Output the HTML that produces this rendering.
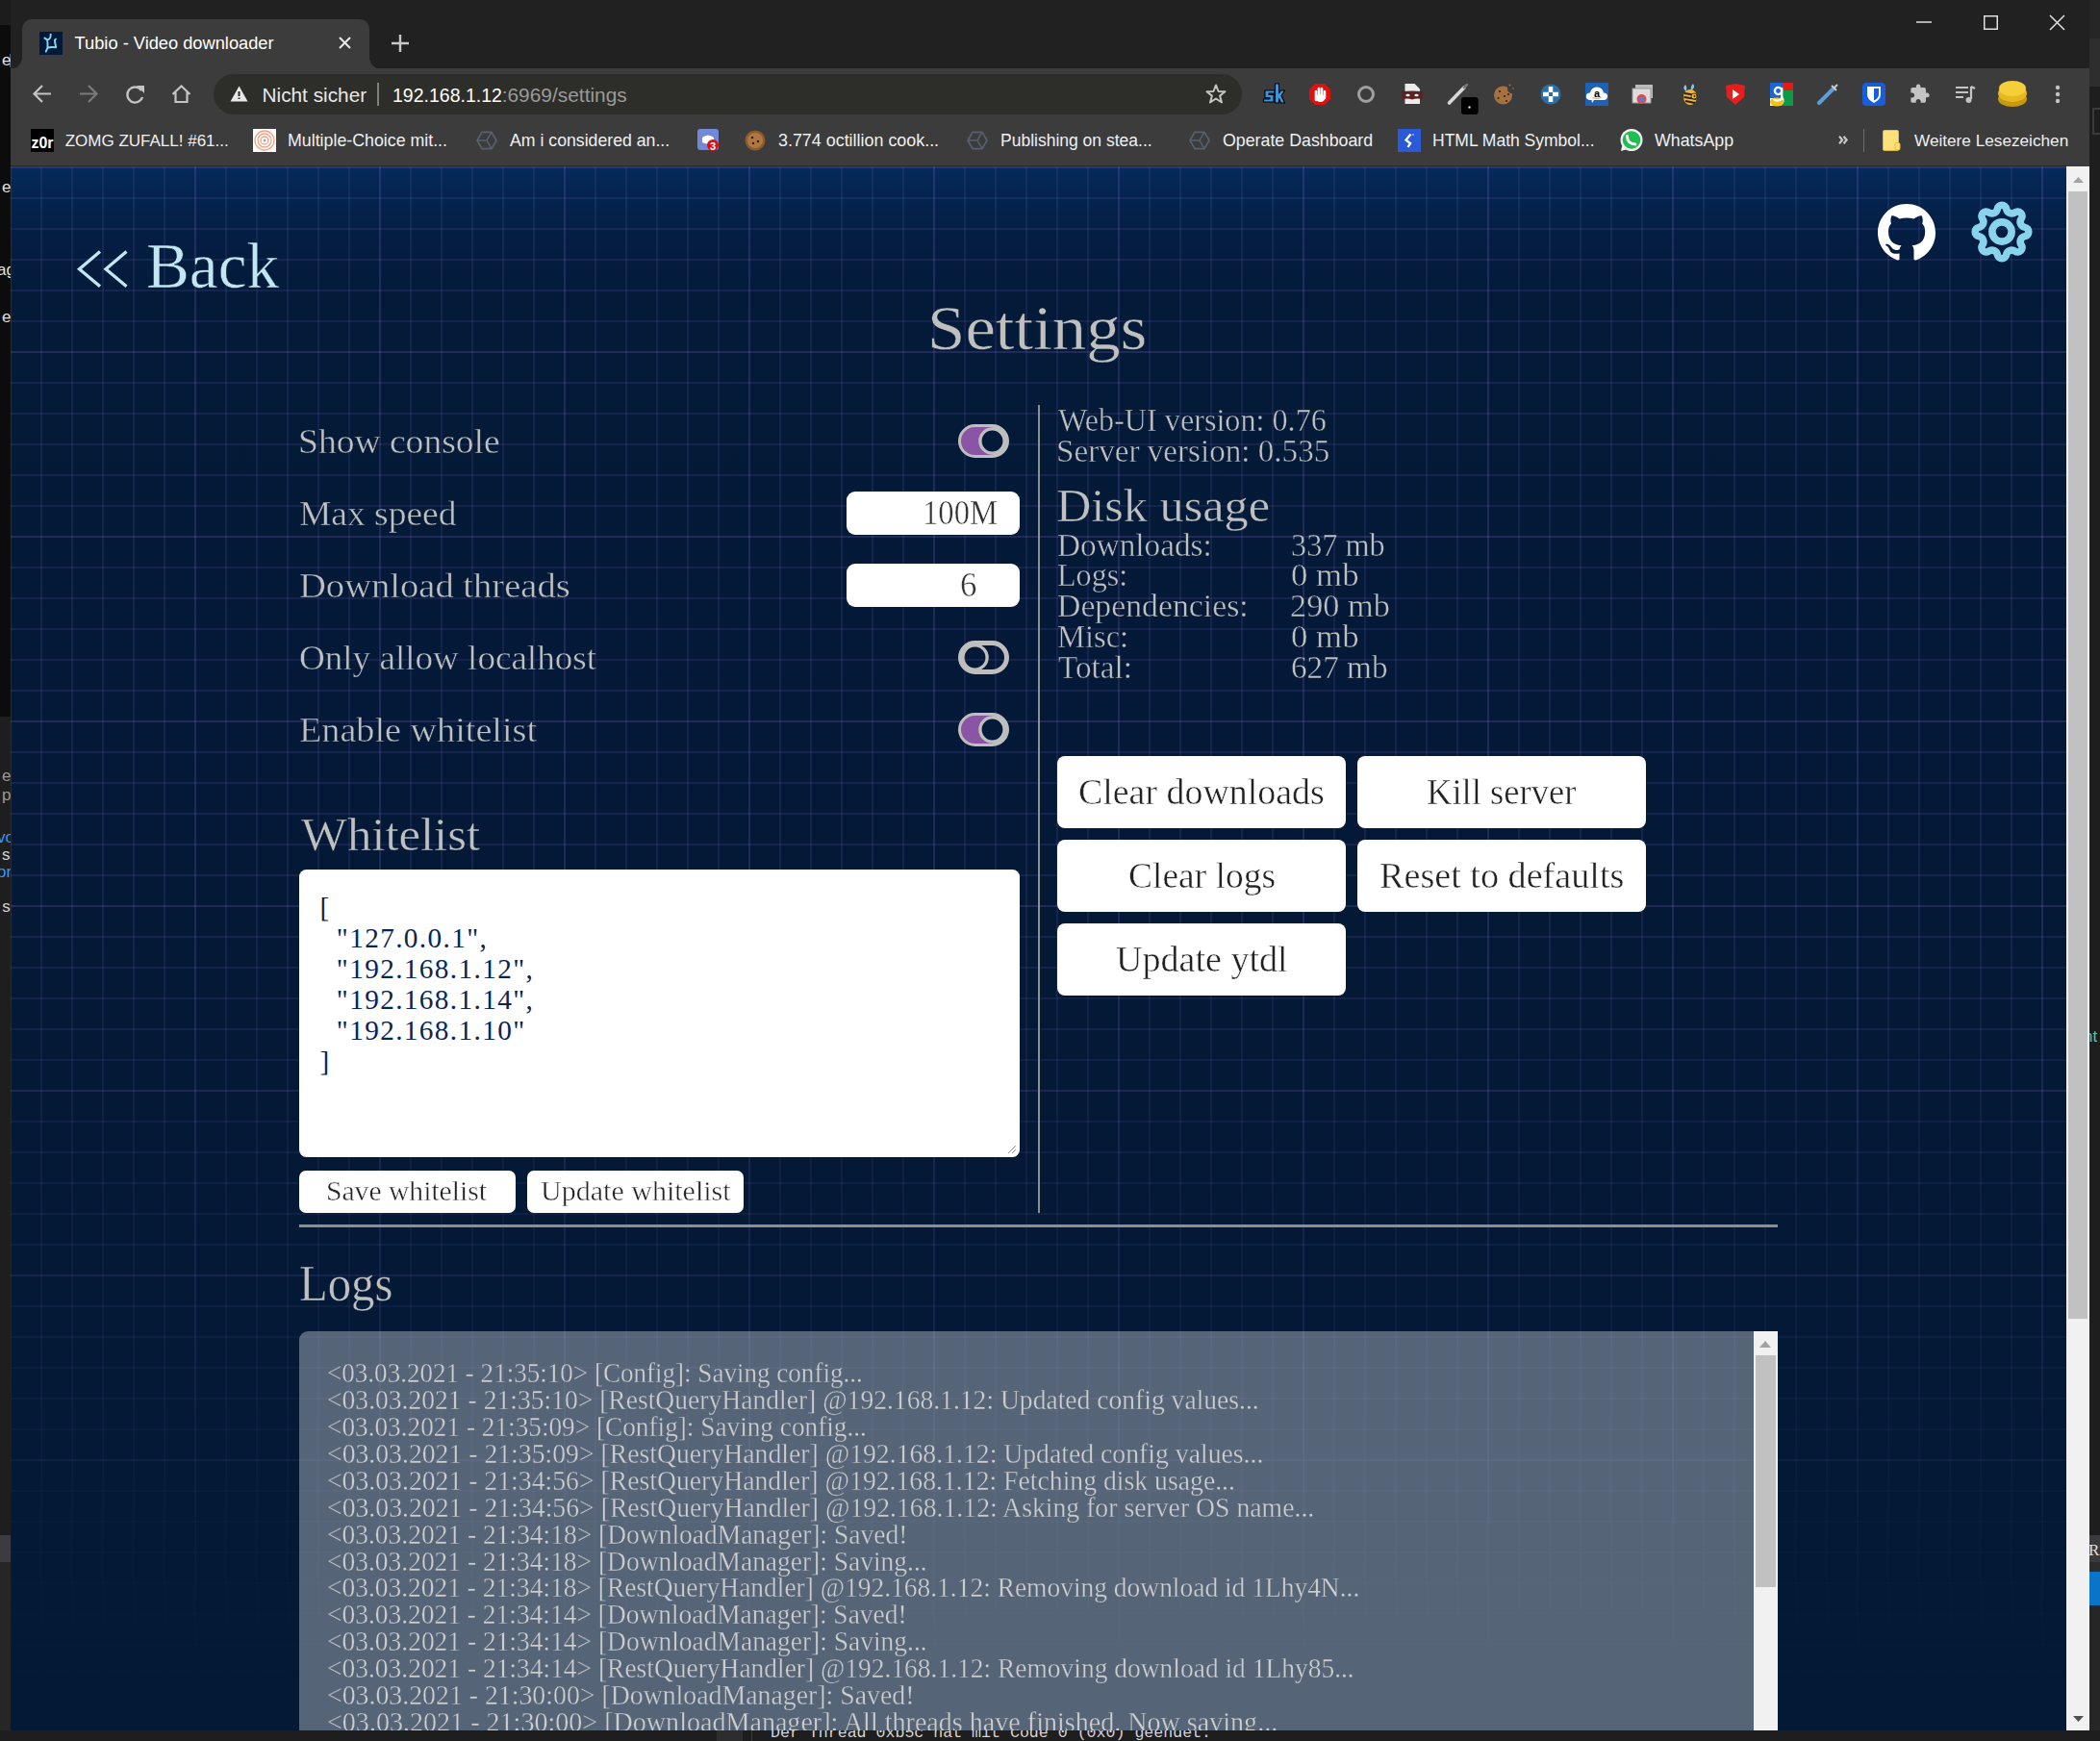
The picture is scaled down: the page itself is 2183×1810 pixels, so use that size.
<!DOCTYPE html>
<html><head><meta charset="utf-8"><title>Tubio - Video downloader</title>
<style>
html,body{margin:0;padding:0;}
body{width:2183px;height:1810px;position:relative;overflow:hidden;background:#0c0c0c;}
.t{position:absolute;white-space:pre;line-height:1;}
.b{position:absolute;box-sizing:border-box;}
svg{position:absolute;overflow:visible;}
</style></head><body>
<div class="b" style="left:0px;top:0px;width:11px;height:26px;background:#1c1c1c;"></div>
<div class="b" style="left:0px;top:26px;width:11px;height:719px;background:#0c0c0c;"></div>
<div class="b" style="left:0px;top:745px;width:11px;height:851px;background:#1e1e1e;"></div>
<div class="b" style="left:0px;top:1596px;width:11px;height:28px;background:#3c3c40;"></div>
<div class="b" style="left:0px;top:1624px;width:11px;height:186px;background:#262626;"></div>
<div class="b" style="left:2172px;top:0px;width:11px;height:1810px;background:#1e1e1e;"></div>
<div class="b" style="left:2172px;top:0px;width:11px;height:40px;background:#262626;"></div>
<div class="b" style="left:2172px;top:40px;width:11px;height:50px;background:#2e2e2e;"></div>
<div class="b" style="left:2175px;top:112px;width:11px;height:28px;border:2px solid #3a3a3a;"></div>
<div class="b" style="left:2172px;top:1596px;width:11px;height:28px;background:#3a3a3e;"></div>
<div class="b" style="left:2172px;top:1624px;width:11px;height:10px;background:#2c2c2c;"></div>
<div class="b" style="left:2172px;top:1669px;width:11px;height:141px;background:#262626;"></div>
<div class="b" style="left:2172px;top:1634px;width:11px;height:35px;background:#0a74c8;"></div>
<div class="b" style="left:2172px;top:1000px;width:11px;height:700px;overflow:hidden;"><div class="t" style="left:-6.0px;top:69px;font-size:17px;color:#4ec9b0;font-family:'Liberation Sans', sans-serif;">nt</div>
<div class="t" style="left:-1.0px;top:603px;font-size:17px;color:#e0e0e0;font-family:'Liberation Serif', serif;">R</div>
</div>
<div class="b" style="left:10px;top:56px;width:1px;height:14px;background:#4a6a90;"></div>
<div class="b" style="left:0;top:0;width:11px;height:1000px;overflow:hidden;"><div class="t" style="left:2.0px;top:54px;font-size:17px;color:#e0e0e0;font-family:'Liberation Sans', sans-serif;">e</div>
<div class="t" style="left:2.0px;top:186px;font-size:17px;color:#e0e0e0;font-family:'Liberation Sans', sans-serif;">e</div>
<div class="t" style="left:-3.0px;top:272px;font-size:17px;color:#e0e0e0;font-family:'Liberation Sans', sans-serif;">ag</div>
<div class="t" style="left:2.0px;top:321px;font-size:17px;color:#e0e0e0;font-family:'Liberation Sans', sans-serif;">e</div>
<div class="t" style="left:2.0px;top:798px;font-size:17px;color:#9a9a9a;font-family:'Liberation Sans', sans-serif;">e</div>
<div class="t" style="left:2.0px;top:818px;font-size:17px;color:#9a9a9a;font-family:'Liberation Sans', sans-serif;">p</div>
<div class="t" style="left:-3.0px;top:862px;font-size:17px;color:#3794ff;font-family:'Liberation Sans', sans-serif;">vo</div>
<div class="t" style="left:2.0px;top:880px;font-size:17px;color:#d4d4d4;font-family:'Liberation Sans', sans-serif;">s</div>
<div class="t" style="left:-3.0px;top:898px;font-size:17px;color:#3794ff;font-family:'Liberation Sans', sans-serif;">on</div>
<div class="t" style="left:-12.0px;top:934px;font-size:17px;color:#d4d4d4;font-family:'Liberation Sans', sans-serif;">d s</div>
</div>
<div class="b" style="left:0;top:1799px;width:2183px;height:11px;overflow:hidden;background:#1e1e1e;"><div class="b" style="left:745px;top:0px;width:27px;height:11px;background:#2d2d2d;"></div>
<div class="b" style="left:781px;top:0px;width:1px;height:11px;background:#3a3a3a;"></div>
<div class="t" style="left:801.0px;top:-5px;font-size:16.6px;color:#d4d4d4;font-family:'Liberation Mono', monospace;">Der Thread 0xb5c hat mit Code 0 (0x0) geendet.</div>
</div>
<div class="b" style="left:11px;top:0px;width:2161px;height:71px;background:#212121;"></div>
<div class="b" style="left:23px;top:20px;width:361px;height:52px;background:#3c3c3c;border-radius:10px 10px 0 0;"></div>
<div class="b" style="left:11px;top:60px;width:12px;height:12px;background:radial-gradient(circle at 0 0, #212121 11.5px, #3c3c3c 12px);"></div>
<div class="b" style="left:384px;top:60px;width:12px;height:12px;background:radial-gradient(circle at 100% 0, #212121 11.5px, #3c3c3c 12px);"></div>
<div class="b" style="left:11px;top:71px;width:2161px;height:102px;background:#3c3c3c;"></div>
<div class="b" style="left:11px;top:172px;width:2137px;height:1px;background:#2a2a2a;"></div>
<div class="b" style="left:41px;top:33px;width:24px;height:24px;background:#021a3a;"></div>
<svg style="left:41px;top:33px" width="24" height="24" viewBox="0 0 24 24"><path d="M11.7 2.6 C11.8 6.5 10.8 8.3 8.1 8.4 M5.4 6.6 L8.1 8.4 C8.6 11 8.7 14 8.4 16.8 L6.7 20.6 M8.4 16.8 C11 15.6 14 15.8 17.2 16.3 C16.6 13.5 16 11 15.9 8.6 L17 7.6" fill="none" stroke="#8ad8f0" stroke-width="1.9" stroke-linecap="round" stroke-linejoin="round"/></svg>
<div class="t" style="left:77.6px;top:36px;font-size:18.25px;color:#ffffff;font-family:'Liberation Sans', sans-serif;">Tubio - Video downloader</div>
<svg style="left:352px;top:38px" width="13" height="13" viewBox="0 0 13 13"><path d="M1 1 L12 12 M12 1 L1 12" stroke="#e8e8e8" stroke-width="2"/></svg>
<svg style="left:407px;top:36px" width="18" height="18" viewBox="0 0 18 18"><path d="M9 0 V18 M0 9 H18" stroke="#c8c8c8" stroke-width="2.4"/></svg>
<svg style="left:1992px;top:22px" width="16" height="2" viewBox="0 0 16 2"><path d="M0 1 H16" stroke="#e0e0e0" stroke-width="1.5"/></svg>
<svg style="left:2062px;top:16px" width="15" height="15" viewBox="0 0 15 15"><rect x="0.75" y="0.75" width="13.5" height="13.5" fill="none" stroke="#e0e0e0" stroke-width="1.5"/></svg>
<svg style="left:2131px;top:16px" width="15" height="15" viewBox="0 0 15 15"><path d="M0 0 L15 15 M15 0 L0 15" stroke="#e0e0e0" stroke-width="1.5"/></svg>
<svg style="left:34px;top:88px" width="20" height="19" viewBox="0 0 20 19"><path d="M19 9.5 H2 M10 1 L1.5 9.5 L10 18" fill="none" stroke="#c4c4c4" stroke-width="2.2"/></svg>
<svg style="left:82px;top:88px" width="20" height="19" viewBox="0 0 20 19"><path d="M1 9.5 H18 M10 1 L18.5 9.5 L10 18" fill="none" stroke="#7a7a7a" stroke-width="2.2"/></svg>
<svg style="left:130px;top:88px" width="21" height="20" viewBox="0 0 21 20"><path d="M17 6 A8 8 0 1 0 18 13" fill="none" stroke="#c4c4c4" stroke-width="2.3"/><path d="M12 1 L20 1 L20 9 Z" fill="#c4c4c4"/></svg>
<svg style="left:178px;top:88px" width="21" height="19" viewBox="0 0 21 19"><path d="M1.5 10 L10.5 1.5 L19.5 10 M4.5 8 V18 H16.5 V8" fill="none" stroke="#c4c4c4" stroke-width="2.2" stroke-linejoin="miter"/></svg>
<div class="b" style="left:222px;top:77px;width:1069px;height:42px;background:#2d2d29;border-radius:21px;"></div>
<svg style="left:239px;top:89px" width="19" height="17" viewBox="0 0 19 17"><path d="M9.5 0.5 L18.5 16.5 H0.5 Z" fill="#e8e8e8"/><path d="M9.5 6 V11 M9.5 12.5 V14" stroke="#2d2d29" stroke-width="2"/></svg>
<div class="t" style="left:272.5px;top:89px;font-size:20.8px;color:#e8e8e8;font-family:'Liberation Sans', sans-serif;">Nicht sicher</div>
<div class="b" style="left:392px;top:86px;width:2px;height:24px;background:#808080;"></div>
<div class="t" style="left:408.0px;top:90px;font-size:19.5px;color:#ffffff;font-family:'Liberation Sans', sans-serif;">192.168.1.12</div>
<div class="t" style="left:521.7px;top:89px;font-size:20.9px;color:#9a9a9a;font-family:'Liberation Sans', sans-serif;">:6969/settings</div>
<svg style="left:1253px;top:87px" width="22" height="21" viewBox="0 0 22 21"><path d="M11 1.5 L13.6 8 L20.5 8.3 L15.1 12.6 L17 19.4 L11 15.5 L5 19.4 L6.9 12.6 L1.5 8.3 L8.4 8 Z" fill="none" stroke="#c4c4c4" stroke-width="2" stroke-linejoin="round"/></svg>
<svg style="left:1312px;top:86px" width="24" height="24" viewBox="0 0 24 24"><g><path d="M3 8 H13 V11 H7 V12.5 H12 V20 H1.5 V17 H8 V15.5 H3 Z" fill="#3a9ae0" stroke="#000" stroke-width="1.1" stroke-linejoin="round"/><path d="M13.5 1 H17.5 V11 L19.5 8 H23.5 L20 13.5 L23.5 21 H19.5 L17.5 16.5 V21 H13.5 Z" fill="#3a9ae0" stroke="#000" stroke-width="1.1" stroke-linejoin="round"/></g></svg>
<svg style="left:1360px;top:86px" width="24" height="24" viewBox="0 0 24 24"><path d="M7 1 H17 L23 7 V17 L17 23 H7 L1 17 V7 Z" fill="#e01010"/><path d="M8 18 V9 M11 16 V6 M14 16 V6 M17 16 V9" stroke="#fff" stroke-width="2.6" stroke-linecap="round"/><ellipse cx="12.5" cy="16" rx="5" ry="4" fill="#fff"/></svg>
<svg style="left:1408px;top:86px" width="24" height="24" viewBox="0 0 24 24"><circle cx="12" cy="12" r="7.5" fill="none" stroke="#a0a0a0" stroke-width="3"/></svg>
<svg style="left:1456px;top:86px" width="24" height="24" viewBox="0 0 24 24"><path d="M4.5 1 H14.5 L20 6.5 V22 H4.5 Z" fill="#ececec"/><path d="M1 9 Q12 8 23 9 L22.5 17 Q16 16 12 17.5 Q8 16 1.5 17 Z" fill="#5a2222"/><ellipse cx="7.5" cy="13" rx="2.2" ry="1.3" fill="#f0f0f0"/><ellipse cx="16.5" cy="13" rx="2.2" ry="1.3" fill="#f0f0f0"/></svg>
<svg style="left:1505px;top:86px" width="24" height="24" viewBox="0 0 24 24"><path d="M1.5 21 L17 5" stroke="#d8d8d8" stroke-width="3.6" stroke-linecap="round"/><path d="M17 5 L20 2" stroke="#777" stroke-width="2.5" stroke-linecap="round"/><rect x="14" y="15" width="17.7" height="18" rx="3" fill="#000"/><rect x="21.5" y="24.5" width="2" height="2" fill="#fff"/></svg>
<svg style="left:1551px;top:86px" width="24" height="24" viewBox="0 0 24 24"><circle cx="11.5" cy="13" r="9.5" fill="#a57143"/><circle cx="20.5" cy="6.5" r="4.5" fill="#3c3c3c"/><circle cx="18.5" cy="2.5" r="0.9" fill="#a57143"/><circle cx="22" cy="6" r="0.8" fill="#a57143"/><circle cx="8" cy="9" r="1.1" fill="#3a2010"/><circle cx="13" cy="14" r="1.1" fill="#3a2010"/><circle cx="6.5" cy="16" r="1.1" fill="#3a2010"/><circle cx="15" cy="19" r="1" fill="#3a2010"/><circle cx="17" cy="12" r="1" fill="#3a2010"/></svg>
<svg style="left:1600px;top:86px" width="24" height="24" viewBox="0 0 24 24"><circle cx="12" cy="12" r="10.5" fill="#2a6fa8"/><path d="M12 4 V20 M4 12 H20" stroke="#fff" stroke-width="4.5"/><rect x="10" y="10" width="4" height="4" fill="#2a6fa8"/></svg>
<svg style="left:1648px;top:86px" width="24" height="24" viewBox="0 0 24 24"><rect x="0" y="0" width="24" height="24" fill="#1d62b4"/><path d="M4 18 Q0 17 1 13 Q1.5 10 5 10.5 Q6 5 12 4.5 Q18 5 19 10.5 Q23 10.5 23 14 Q23 18 19 18 H9 L7 21 L6.5 18 Z" fill="#fff"/><text x="12" y="14.5" text-anchor="middle" font-family="Liberation Sans" font-weight="bold" font-size="11" fill="#000">a</text><path d="M7.5 15.5 Q12 17.5 16.5 15.5" fill="none" stroke="#f39c12" stroke-width="1"/></svg>
<svg style="left:1696px;top:86px" width="24" height="24" viewBox="0 0 24 24"><rect x="4" y="2" width="18" height="14" fill="#bbb"/><rect x="1" y="6" width="19" height="15" fill="#ddd" stroke="#999" stroke-width="1"/><circle cx="10.5" cy="17" r="5" fill="#e44"/><circle cx="10.5" cy="17" r="2.5" fill="#3b8ae8"/></svg>
<svg style="left:1745px;top:86px" width="24" height="24" viewBox="0 0 24 24"><path d="M7 2 Q3 6 8 9 Q9 4 7 2 Z M15 1 Q18 5 13 8 Q12 4 15 1 Z" fill="#8fc4e8"/><ellipse cx="12" cy="15" rx="7" ry="8" fill="#f3b52b"/><path d="M6 11 L18 13 M5.5 15 L18.5 17 M7 19 L17 21" stroke="#222" stroke-width="2"/><circle cx="16" cy="14" r="3" fill="#f3b52b" stroke="#222" stroke-width="0.8"/><circle cx="16.5" cy="14" r="1" fill="#222"/></svg>
<svg style="left:1792px;top:86px" width="24" height="24" viewBox="0 0 24 24"><path d="M2 3 L12 1 L22 3 L21 15 L12 23 L3 15 Z" fill="#e61e1e"/><path d="M9 7 L16 12 L9 17 Z" fill="#fff"/></svg>
<svg style="left:1840px;top:86px" width="24" height="24" viewBox="0 0 24 24"><rect x="0" y="0" width="24" height="24" fill="#fff"/><rect x="0" y="0" width="13" height="16" fill="#1a66d8"/><rect x="13" y="0" width="11" height="8" fill="#e41b17"/><path d="M13 8 H24 V24 H11 Q17 20 13 14 Z" fill="#0c9a44"/><ellipse cx="7" cy="20" rx="7" ry="4.5" fill="#f4c20d"/><circle cx="8.5" cy="8.5" r="3.6" fill="none" stroke="#fff" stroke-width="2.3"/><path d="M12.2 5 V15 Q12 18.5 7.5 18.5 Q5 18.5 4 17" fill="none" stroke="#fff" stroke-width="2.3"/></svg>
<svg style="left:1888px;top:86px" width="24" height="24" viewBox="0 0 24 24"><path d="M3 21 L17 7" stroke="#5aa0e0" stroke-width="4" stroke-linecap="round"/><path d="M16 3 L21 8 M19 5 L22 2" stroke="#ccc" stroke-width="2"/></svg>
<svg style="left:1936px;top:86px" width="24" height="24" viewBox="0 0 24 24"><rect x="0" y="0" width="24" height="24" rx="4" fill="#175ddc"/><path d="M5 4 H19 V12 Q19 17.5 12 21 Q5 17.5 5 12 Z" fill="#fff"/><path d="M12 6 H17 V12 Q17 16 12 18.5 Z" fill="#175ddc"/></svg>
<svg style="left:1984px;top:86px" width="24" height="24" viewBox="0 0 24 24"><g transform="translate(0.5 0.5) scale(0.92)"><path d="M20.5 11H19V7c0-1.1-.9-2-2-2h-4V3.5C13 2.12 11.88 1 10.5 1S8 2.12 8 3.5V5H4c-1.1 0-1.99.9-1.99 2v3.8H3.5c1.49 0 2.7 1.21 2.7 2.7s-1.21 2.7-2.7 2.7H2V20c0 1.1.9 2 2 2h3.8v-1.5c0-1.49 1.21-2.7 2.7-2.7 1.49 0 2.7 1.21 2.7 2.7V22H17c1.1 0 2-.9 2-2v-4h1.5c1.38 0 2.5-1.12 2.5-2.5S21.88 11 20.5 11z" fill="#c4c4c4"/></g></svg>
<svg style="left:2031px;top:86px" width="24" height="24" viewBox="0 0 24 24"><path d="M2 5 H15 M2 10 H15 M2 15 H10" stroke="#c4c4c4" stroke-width="2.2"/><path d="M18 4 V17" stroke="#c4c4c4" stroke-width="2.2"/><circle cx="15.5" cy="18" r="3" fill="#c4c4c4"/><path d="M18 4 L22 6" stroke="#c4c4c4" stroke-width="2.2"/></svg>
<svg style="left:2075px;top:80px" width="34" height="34" viewBox="0 0 34 34"><ellipse cx="17" cy="23" rx="15" ry="8" fill="#c89a10"/><ellipse cx="17" cy="17" rx="15" ry="9" fill="#e8b820"/><ellipse cx="17" cy="12" rx="14" ry="8" fill="#f5cf3a"/></svg>
<svg style="left:2136px;top:88px" width="6" height="20" viewBox="0 0 6 20"><circle cx="3" cy="3" r="2.2" fill="#c4c4c4"/><circle cx="3" cy="10" r="2.2" fill="#c4c4c4"/><circle cx="3" cy="17" r="2.2" fill="#c4c4c4"/></svg>
<div class="b" style="left:32px;top:134px;width:24px;height:24px;background:#000;"></div>
<svg style="left:32px;top:134px" width="24" height="24" viewBox="0 0 24 24"><text x="0.5" y="19.5" font-family="Liberation Sans" font-weight="bold" font-size="17" fill="#fff" textLength="23" lengthAdjust="spacingAndGlyphs">z0r</text></svg>
<div class="t" style="left:67.7px;top:138px;font-size:17.0px;color:#f0f0f0;font-family:'Liberation Sans', sans-serif;">ZOMG ZUFALL! #61...</div>
<svg style="left:263px;top:134px" width="24" height="24" viewBox="0 0 24 24"><rect width="24" height="24" fill="#fff"/><circle cx="12" cy="12" r="10" fill="none" stroke="#f5a080" stroke-width="1.3"/><circle cx="12" cy="12" r="7" fill="none" stroke="#f5a080" stroke-width="1.3"/><circle cx="12" cy="12" r="4" fill="none" stroke="#f5a080" stroke-width="1.3"/><circle cx="12" cy="12" r="1.5" fill="#9ab"/></svg>
<div class="t" style="left:299.0px;top:138px;font-size:17.8px;color:#f0f0f0;font-family:'Liberation Sans', sans-serif;">Multiple-Choice mit...</div>
<svg style="left:494px;top:134px" width="24" height="24" viewBox="0 0 24 24"><path d="M22 12 L17 3.3 H7 L2 12 L7 20.7 H17 Z" fill="none" stroke="#566070" stroke-width="1.7" stroke-linejoin="round"/><path d="M12 12 L2 12 M12 12 L17 3.3 M12 12 L17 20.7" fill="none" stroke="#566070" stroke-width="1.5"/></svg>
<svg style="left:1004px;top:134px" width="24" height="24" viewBox="0 0 24 24"><path d="M22 12 L17 3.3 H7 L2 12 L7 20.7 H17 Z" fill="none" stroke="#566070" stroke-width="1.7" stroke-linejoin="round"/><path d="M12 12 L2 12 M12 12 L17 3.3 M12 12 L17 20.7" fill="none" stroke="#566070" stroke-width="1.5"/></svg>
<svg style="left:1235px;top:134px" width="24" height="24" viewBox="0 0 24 24"><path d="M22 12 L17 3.3 H7 L2 12 L7 20.7 H17 Z" fill="none" stroke="#566070" stroke-width="1.7" stroke-linejoin="round"/><path d="M12 12 L2 12 M12 12 L17 3.3 M12 12 L17 20.7" fill="none" stroke="#566070" stroke-width="1.5"/></svg>
<div class="t" style="left:530.0px;top:138px;font-size:17.7px;color:#f0f0f0;font-family:'Liberation Sans', sans-serif;">Am i considered an...</div>
<svg style="left:725px;top:134px" width="24" height="24" viewBox="0 0 24 24"><rect x="0" y="0" width="22" height="22" rx="3" fill="#7289da"/><path d="M5 9 Q11 4 17 9 V14 Q11 17 5 14 Z" fill="#fff"/><circle cx="16" cy="17" r="6" fill="#e01010"/><text x="16" y="21.5" text-anchor="middle" font-family="Liberation Sans" font-weight="bold" font-size="11" fill="#fff">3</text></svg>
<svg style="left:773px;top:134px" width="24" height="24" viewBox="0 0 24 24"><circle cx="12" cy="12" r="10.5" fill="#8a5a30"/><circle cx="12" cy="12" r="8" fill="#b07840"/><circle cx="9" cy="9" r="1.3" fill="#3a2010"/><circle cx="15" cy="13" r="1.3" fill="#3a2010"/><circle cx="10" cy="15" r="1.2" fill="#3a2010"/></svg>
<div class="t" style="left:809.0px;top:138px;font-size:17.9px;color:#f0f0f0;font-family:'Liberation Sans', sans-serif;">3.774 octillion cook...</div>
<div class="t" style="left:1040.0px;top:138px;font-size:17.5px;color:#f0f0f0;font-family:'Liberation Sans', sans-serif;">Publishing on stea...</div>
<div class="t" style="left:1271.0px;top:138px;font-size:17.8px;color:#f0f0f0;font-family:'Liberation Sans', sans-serif;">Operate Dashboard</div>
<svg style="left:1453px;top:134px" width="24" height="24" viewBox="0 0 24 24"><rect width="24" height="24" fill="#2a5ad8"/><path d="M13.5 5.5 L8.5 11.5 L13 15 L10.5 19" fill="none" stroke="#fff" stroke-width="2.3" stroke-linejoin="miter"/><circle cx="16" cy="6" r="1" fill="#9ab4f0"/></svg>
<div class="t" style="left:1489.0px;top:138px;font-size:17.5px;color:#f0f0f0;font-family:'Liberation Sans', sans-serif;">HTML Math Symbol...</div>
<svg style="left:1684px;top:134px" width="24" height="24" viewBox="0 0 24 24"><circle cx="12" cy="11.5" r="11.5" fill="#f0f0f0"/><path d="M1 23 L2.5 16 L8 21 Z" fill="#f0f0f0"/><circle cx="12" cy="11.5" r="9.3" fill="#1fbf4f"/><path d="M7.5 7.5 Q7.5 15.5 16 16" fill="none" stroke="#fff" stroke-width="2.8" stroke-linecap="round"/></svg>
<div class="t" style="left:1720.0px;top:138px;font-size:17.8px;color:#f0f0f0;font-family:'Liberation Sans', sans-serif;">WhatsApp</div>
<svg style="left:1911px;top:141px" width="10" height="9" viewBox="0 0 10 9"><path d="M1 0.8 L4.2 4.5 L1 8.2 M5.5 0.8 L8.7 4.5 L5.5 8.2" fill="none" stroke="#c8c8c8" stroke-width="2.1"/></svg>
<div class="b" style="left:1937px;top:134px;width:1px;height:24px;background:#6a6a6a;"></div>
<svg style="left:1957px;top:135px" width="19" height="22" viewBox="0 0 19 22"><rect x="0.5" y="0.5" width="16" height="21" rx="1.5" fill="#fde07a" stroke="#e0b84a" stroke-width="1"/><rect x="13" y="13.5" width="5" height="7.5" rx="1.5" fill="#fde07a" stroke="#e0b84a" stroke-width="1"/></svg>
<div class="t" style="left:1990.0px;top:138px;font-size:17.2px;color:#f0f0f0;font-family:'Liberation Sans', sans-serif;">Weitere Lesezeichen</div>
<div class="b" style="left:11px;top:173px;width:2137px;height:1626px;background:linear-gradient(180deg, #052a5a 0px, #04244e 32px, #041f44 64px, #041c3e 96px, #031a38 150px, #031935 1626px);"></div>
<div class="b" style="left:11px;top:173px;width:2137px;height:1626px;-webkit-mask-image:linear-gradient(180deg, rgba(0,0,0,0.82) 0px, rgba(0,0,0,0.8) 800px, rgba(0,0,0,0.45) 1250px, rgba(0,0,0,0) 1580px);background:linear-gradient(90deg, rgba(170,125,245,0.1) 0px, rgba(170,125,245,0.1) 2px, transparent 2px) -1px 0/192px 192px, linear-gradient(180deg, rgba(170,125,245,0.1) 0px, rgba(170,125,245,0.1) 2px, transparent 2px) 0 0/192px 192px, linear-gradient(90deg, rgba(170,125,245,0.13) 0px, rgba(170,125,245,0.13) 2px, transparent 2px) -1px 0/32px 32px, linear-gradient(180deg, rgba(170,125,245,0.13) 0px, rgba(170,125,245,0.13) 2px, transparent 2px) 0 0/32px 32px;"></div>
<div class="b" style="left:2148px;top:173px;width:24px;height:1626px;background:#f1f1f1;"></div>
<div class="b" style="left:2150px;top:199px;width:20px;height:1172px;background:#c1c1c1;"></div>
<svg style="left:2155px;top:184px" width="11" height="6" viewBox="0 0 11 6"><path d="M5.5 0 L11 6 H0 Z" fill="#a3a3a3"/></svg>
<svg style="left:2155px;top:1784px" width="11" height="6" viewBox="0 0 11 6"><path d="M5.5 6 L11 0 H0 Z" fill="#505050"/></svg>
<svg style="left:79px;top:259px" width="56" height="42" viewBox="79 259 56 42"><path d="M104 261.6 L82.5 279.7 L104 297.8 M131.5 261.6 L110 279.7 L131.5 297.8" fill="none" stroke="#c2e6f2" stroke-width="3.3" stroke-linejoin="miter"/></svg>
<div class="t" style="left:151.78px;top:243px;font-size:66.92px;color:#c2e6f2;font-family:'Liberation Serif', serif;transform:scaleX(1.0051);transform-origin:0 0;-webkit-text-stroke:0.45px #031a38;">Back</div>
<svg style="left:1952px;top:212px" width="60" height="60" viewBox="0 0 16 16"><path fill="#ffffff" d="M8 0C3.58 0 0 3.58 0 8c0 3.54 2.290 6.53 5.47 7.59.4.07.55-.17.55-.38 0-.19-.01-.82-.01-1.49-2.01.37-2.53-.49-2.690-.94-.09-.23-.48-.94-.82-1.130-.28-.15-.68-.52-.01-.53.63-.01 1.08.58 1.23.82.72 1.21 1.87.87 2.33.66.07-.52.28-.87.51-1.07-1.78-.2-3.64-.89-3.64-3.95 0-.87.31-1.59.82-2.15-.08-.2-.36-1.02.08-2.12 0 0 .67-.21 2.2.82.64-.18 1.32-.27 2-.27.68 0 1.36.09 2 .27 1.53-1.04 2.2-.82 2.2-.82.44 1.1.16 1.92.08 2.12.51.56.82 1.27.82 2.15 0 3.07-1.87 3.75-3.65 3.95.29.25.54.73.54 1.48 0 1.07-.01 1.93-.01 2.2 0 .21.15.46.55.38A8.013 8.013 0 0016 8c0-4.42-3.58-8-8-8z"/></svg>
<svg style="left:2044.5px;top:205.4px" width="72" height="72" viewBox="0 0 72 72"><path d="M31.373 12.077 A4.7 4.7 0 0 1 40.627 12.077 A5.791 5.791 0 0 0 49.644 15.812 A4.7 4.7 0 0 1 56.188 22.356 A5.791 5.791 0 0 0 59.923 31.373 A4.7 4.7 0 0 1 59.923 40.627 A5.791 5.791 0 0 0 56.188 49.644 A4.7 4.7 0 0 1 49.644 56.188 A5.791 5.791 0 0 0 40.627 59.923 A4.7 4.7 0 0 1 31.373 59.923 A5.791 5.791 0 0 0 22.356 56.188 A4.7 4.7 0 0 1 15.812 49.644 A5.791 5.791 0 0 0 12.077 40.627 A4.7 4.7 0 0 1 12.077 31.373 A5.791 5.791 0 0 0 15.812 22.356 A4.7 4.7 0 0 1 22.356 15.812 A5.791 5.791 0 0 0 31.373 12.077 Z" fill="none" stroke="#89d3ec" stroke-width="7.6" stroke-linejoin="round"/><circle cx="36" cy="36" r="10.1" fill="none" stroke="#89d3ec" stroke-width="7.65"/></svg>
<div class="t" style="left:964.40px;top:309px;font-size:65.40px;color:#c0c0c0;font-family:'Liberation Serif', serif;transform:scaleX(1.0831);transform-origin:0 0;-webkit-text-stroke:0.45px #031a38;">Settings</div>
<div class="t" style="left:309.56px;top:442px;font-size:35.93px;color:#c0c0c0;font-family:'Liberation Serif', serif;transform:scaleX(1.0453);transform-origin:0 0;-webkit-text-stroke:0.45px #031a38;">Show console</div>
<div class="t" style="left:310.88px;top:517px;font-size:35.93px;color:#c0c0c0;font-family:'Liberation Serif', serif;transform:scaleX(1.0437);transform-origin:0 0;-webkit-text-stroke:0.45px #031a38;">Max speed</div>
<div class="t" style="left:310.84px;top:592px;font-size:35.93px;color:#c0c0c0;font-family:'Liberation Serif', serif;transform:scaleX(1.0737);transform-origin:0 0;-webkit-text-stroke:0.45px #031a38;">Download threads</div>
<div class="t" style="left:310.52px;top:667px;font-size:35.93px;color:#c0c0c0;font-family:'Liberation Serif', serif;transform:scaleX(1.0323);transform-origin:0 0;-webkit-text-stroke:0.45px #031a38;">Only allow localhost</div>
<div class="t" style="left:310.85px;top:742px;font-size:35.93px;color:#c0c0c0;font-family:'Liberation Serif', serif;transform:scaleX(1.0627);transform-origin:0 0;-webkit-text-stroke:0.45px #031a38;">Enable whitelist</div>
<svg style="left:996px;top:441px" width="53" height="35" viewBox="0 0 53 35"><path d="M17.5 1.5 H35.5 V33.5 H17.5 A16 16 0 0 1 17.5 1.5 Z" fill="#8b55a6"/><path d="M35.5 1.5 A16 16 0 0 1 35.5 33.5 Z" fill="#bebebe"/><rect x="1.5" y="1.5" width="50" height="32" rx="16" fill="none" stroke="#bebebe" stroke-width="3"/><circle cx="35.5" cy="17.5" r="12.6" fill="#031a39" stroke="#bebebe" stroke-width="3.4"/></svg>
<svg style="left:996px;top:666px" width="53" height="35" viewBox="0 0 53 35"><rect x="2.5" y="2.5" width="48" height="30" rx="15" fill="none" stroke="#bebebe" stroke-width="5"/><circle cx="17.5" cy="17.5" r="12.6" fill="none" stroke="#bebebe" stroke-width="3.4"/></svg>
<svg style="left:996px;top:741px" width="53" height="35" viewBox="0 0 53 35"><path d="M17.5 1.5 H35.5 V33.5 H17.5 A16 16 0 0 1 17.5 1.5 Z" fill="#8b55a6"/><path d="M35.5 1.5 A16 16 0 0 1 35.5 33.5 Z" fill="#bebebe"/><rect x="1.5" y="1.5" width="50" height="32" rx="16" fill="none" stroke="#bebebe" stroke-width="3"/><circle cx="35.5" cy="17.5" r="12.6" fill="#031a39" stroke="#bebebe" stroke-width="3.4"/></svg>
<div class="b" style="left:880px;top:511px;width:180px;height:45px;background:#fff;border-radius:9px;"></div>
<div class="t" style="left:959.22px;top:515px;font-size:36.09px;color:#333;font-family:'Liberation Serif', serif;transform:scaleX(0.9062);transform-origin:0 0;-webkit-text-stroke:0.45px #ffffff;">100M</div>
<div class="b" style="left:880px;top:586px;width:180px;height:45px;background:#fff;border-radius:9px;"></div>
<div class="t" style="left:997.60px;top:590px;font-size:36.09px;color:#333;font-family:'Liberation Serif', serif;transform:scaleX(0.9666);transform-origin:0 0;-webkit-text-stroke:0.45px #ffffff;">6</div>
<div class="b" style="left:1079px;top:421px;width:2px;height:840px;background:#8e8e8e;"></div>
<div class="t" style="left:1100.00px;top:420px;font-size:33.54px;color:#c0c0c0;font-family:'Liberation Serif', serif;transform:scaleX(0.9593);transform-origin:0 0;-webkit-text-stroke:0.45px #031a38;">Web-UI version: 0.76</div>
<div class="t" style="left:1097.85px;top:452px;font-size:33.54px;color:#c0c0c0;font-family:'Liberation Serif', serif;transform:scaleX(0.9880);transform-origin:0 0;-webkit-text-stroke:0.45px #031a38;">Server version: 0.535</div>
<div class="t" style="left:1098.49px;top:501px;font-size:49.51px;color:#c0c0c0;font-family:'Liberation Serif', serif;transform:scaleX(1.0157);transform-origin:0 0;-webkit-text-stroke:0.45px #031a38;">Disk usage</div>
<div class="t" style="left:1099.00px;top:550px;font-size:33.54px;color:#c0c0c0;font-family:'Liberation Serif', serif;transform:scaleX(0.9917);transform-origin:0 0;-webkit-text-stroke:0.45px #031a38;">Downloads:</div>
<div class="t" style="left:1341.55px;top:550px;font-size:33.54px;color:#c0c0c0;font-family:'Liberation Serif', serif;transform:scaleX(0.9618);transform-origin:0 0;-webkit-text-stroke:0.45px #031a38;">337 mb</div>
<div class="t" style="left:1099.04px;top:581px;font-size:33.54px;color:#c0c0c0;font-family:'Liberation Serif', serif;transform:scaleX(0.9571);transform-origin:0 0;-webkit-text-stroke:0.45px #031a38;">Logs:</div>
<div class="t" style="left:1341.78px;top:581px;font-size:33.54px;color:#c0c0c0;font-family:'Liberation Serif', serif;transform:scaleX(1.0370);transform-origin:0 0;-webkit-text-stroke:0.45px #031a38;">0 mb</div>
<div class="t" style="left:1098.99px;top:613px;font-size:33.54px;color:#c0c0c0;font-family:'Liberation Serif', serif;transform:scaleX(1.0067);transform-origin:0 0;-webkit-text-stroke:0.45px #031a38;">Dependencies:</div>
<div class="t" style="left:1341.46px;top:613px;font-size:33.54px;color:#c0c0c0;font-family:'Liberation Serif', serif;transform:scaleX(1.0225);transform-origin:0 0;-webkit-text-stroke:0.45px #031a38;">290 mb</div>
<div class="t" style="left:1099.02px;top:645px;font-size:33.54px;color:#c0c0c0;font-family:'Liberation Serif', serif;transform:scaleX(0.9709);transform-origin:0 0;-webkit-text-stroke:0.45px #031a38;">Misc:</div>
<div class="t" style="left:1341.78px;top:645px;font-size:33.54px;color:#c0c0c0;font-family:'Liberation Serif', serif;transform:scaleX(1.0370);transform-origin:0 0;-webkit-text-stroke:0.45px #031a38;">0 mb</div>
<div class="t" style="left:1099.50px;top:677px;font-size:33.54px;color:#c0c0c0;font-family:'Liberation Serif', serif;transform:scaleX(0.9898);transform-origin:0 0;-webkit-text-stroke:0.45px #031a38;">Total:</div>
<div class="t" style="left:1341.67px;top:677px;font-size:33.54px;color:#c0c0c0;font-family:'Liberation Serif', serif;transform:scaleX(0.9905);transform-origin:0 0;-webkit-text-stroke:0.45px #031a38;">627 mb</div>
<div class="b" style="left:1099px;top:786px;width:300px;height:75px;background:#fff;border-radius:8px;"></div>
<div class="t" style="left:1120.88px;top:805px;font-size:37.69px;color:#222;font-family:'Liberation Serif', serif;transform:scaleX(1.0056);transform-origin:0 0;-webkit-text-stroke:0.45px #ffffff;">Clear downloads</div>
<div class="b" style="left:1411px;top:786px;width:300px;height:75px;background:#fff;border-radius:8px;"></div>
<div class="t" style="left:1482.70px;top:805px;font-size:37.69px;color:#222;font-family:'Liberation Serif', serif;transform:scaleX(0.9705);transform-origin:0 0;-webkit-text-stroke:0.45px #ffffff;">Kill server</div>
<div class="b" style="left:1099px;top:873px;width:300px;height:75px;background:#fff;border-radius:8px;"></div>
<div class="t" style="left:1172.80px;top:892px;font-size:37.69px;color:#222;font-family:'Liberation Serif', serif;transform:scaleX(0.9950);transform-origin:0 0;-webkit-text-stroke:0.45px #ffffff;">Clear logs</div>
<div class="b" style="left:1411px;top:873px;width:300px;height:75px;background:#fff;border-radius:8px;"></div>
<div class="t" style="left:1433.85px;top:892px;font-size:37.69px;color:#222;font-family:'Liberation Serif', serif;transform:scaleX(1.0130);transform-origin:0 0;-webkit-text-stroke:0.45px #ffffff;">Reset to defaults</div>
<div class="b" style="left:1099px;top:960px;width:300px;height:75px;background:#fff;border-radius:8px;"></div>
<div class="t" style="left:1160.24px;top:979px;font-size:37.69px;color:#222;font-family:'Liberation Serif', serif;transform:scaleX(1.0106);transform-origin:0 0;-webkit-text-stroke:0.45px #ffffff;">Update ytdl</div>
<div class="t" style="left:313.00px;top:843px;font-size:49.51px;color:#c0c0c0;font-family:'Liberation Serif', serif;transform:scaleX(1.0253);transform-origin:0 0;-webkit-text-stroke:0.45px #031a38;">Whitelist</div>
<div class="b" style="left:311px;top:904px;width:749px;height:299px;background:#fff;border-radius:7.5px;"></div>
<div class="t" style="left:332.5px;top:929px;font-size:29.3px;color:#0a2552;font-family:'Liberation Serif', serif;letter-spacing:1.35px;">[</div>
<div class="t" style="left:332.5px;top:961px;font-size:29.3px;color:#0a2552;font-family:'Liberation Serif', serif;letter-spacing:1.35px;">  "127.0.0.1",</div>
<div class="t" style="left:332.5px;top:993px;font-size:29.3px;color:#0a2552;font-family:'Liberation Serif', serif;letter-spacing:1.35px;">  "192.168.1.12",</div>
<div class="t" style="left:332.5px;top:1025px;font-size:29.3px;color:#0a2552;font-family:'Liberation Serif', serif;letter-spacing:1.35px;">  "192.168.1.14",</div>
<div class="t" style="left:332.5px;top:1057px;font-size:29.3px;color:#0a2552;font-family:'Liberation Serif', serif;letter-spacing:1.35px;">  "192.168.1.10"</div>
<div class="t" style="left:332.5px;top:1089px;font-size:29.3px;color:#0a2552;font-family:'Liberation Serif', serif;letter-spacing:1.35px;">]</div>
<svg style="left:1046px;top:1189px" width="11" height="11" viewBox="0 0 11 11"><path d="M10 2 L2 10 M10 6 L6 10" stroke="#9a9a9a" stroke-width="1"/></svg>
<div class="b" style="left:311px;top:1217px;width:225px;height:44px;background:#fff;border-radius:7px;"></div>
<div class="t" style="left:339.47px;top:1223px;font-size:30.34px;color:#222;font-family:'Liberation Serif', serif;transform:scaleX(0.9764);transform-origin:0 0;-webkit-text-stroke:0.45px #ffffff;">Save whitelist</div>
<div class="b" style="left:548px;top:1217px;width:225px;height:44px;background:#fff;border-radius:7px;"></div>
<div class="t" style="left:561.80px;top:1223px;font-size:30.34px;color:#222;font-family:'Liberation Serif', serif;transform:scaleX(0.9901);transform-origin:0 0;-webkit-text-stroke:0.45px #ffffff;">Update whitelist</div>
<div class="b" style="left:311px;top:1273px;width:1537px;height:3px;background:#8e8e8e;"></div>
<div class="t" style="left:311.14px;top:1308px;font-size:52.70px;color:#c0c0c0;font-family:'Liberation Serif', serif;transform:scaleX(0.9238);transform-origin:0 0;-webkit-text-stroke:0.45px #031a38;">Logs</div>
<div class="b" style="left:311px;top:1384px;width:1537px;height:415px;background:rgba(255,255,255,0.33);border-radius:9px 0 0 0;"></div>
<div class="b" style="left:1823px;top:1384px;width:25px;height:415px;background:#f1f1f1;"></div>
<div class="b" style="left:1825px;top:1409px;width:21px;height:241px;background:#c1c1c1;"></div>
<svg style="left:1829px;top:1394px" width="12" height="7" viewBox="0 0 12 7"><path d="M6 0 L12 7 H0 Z" fill="#a3a3a3"/></svg>
<div class="b" style="left:0;top:0;width:1823px;height:1799px;overflow:hidden;">
<div class="t" style="left:340.15px;top:1413px;font-size:29.70px;color:#cdcdcd;font-family:'Liberation Serif', serif;transform:scaleX(0.9117);transform-origin:0 0;-webkit-text-stroke:0.35px #566579;">&lt;03.03.2021 - 21:35:10&gt; [Config]: Saving config...</div>
<div class="t" style="left:340.12px;top:1441px;font-size:29.70px;color:#cdcdcd;font-family:'Liberation Serif', serif;transform:scaleX(0.9290);transform-origin:0 0;-webkit-text-stroke:0.35px #566579;">&lt;03.03.2021 - 21:35:10&gt; [RestQueryHandler] @192.168.1.12: Updated config values...</div>
<div class="t" style="left:340.14px;top:1469px;font-size:29.70px;color:#cdcdcd;font-family:'Liberation Serif', serif;transform:scaleX(0.9185);transform-origin:0 0;-webkit-text-stroke:0.35px #566579;">&lt;03.03.2021 - 21:35:09&gt; [Config]: Saving config...</div>
<div class="t" style="left:340.11px;top:1497px;font-size:29.70px;color:#cdcdcd;font-family:'Liberation Serif', serif;transform:scaleX(0.9334);transform-origin:0 0;-webkit-text-stroke:0.35px #566579;">&lt;03.03.2021 - 21:35:09&gt; [RestQueryHandler] @192.168.1.12: Updated config values...</div>
<div class="t" style="left:340.11px;top:1525px;font-size:29.70px;color:#cdcdcd;font-family:'Liberation Serif', serif;transform:scaleX(0.9332);transform-origin:0 0;-webkit-text-stroke:0.35px #566579;">&lt;03.03.2021 - 21:34:56&gt; [RestQueryHandler] @192.168.1.12: Fetching disk usage...</div>
<div class="t" style="left:340.11px;top:1553px;font-size:29.70px;color:#cdcdcd;font-family:'Liberation Serif', serif;transform:scaleX(0.9339);transform-origin:0 0;-webkit-text-stroke:0.35px #566579;">&lt;03.03.2021 - 21:34:56&gt; [RestQueryHandler] @192.168.1.12: Asking for server OS name...</div>
<div class="t" style="left:340.13px;top:1581px;font-size:29.70px;color:#cdcdcd;font-family:'Liberation Serif', serif;transform:scaleX(0.9255);transform-origin:0 0;-webkit-text-stroke:0.35px #566579;">&lt;03.03.2021 - 21:34:18&gt; [DownloadManager]: Saved!</div>
<div class="t" style="left:340.13px;top:1609px;font-size:29.70px;color:#cdcdcd;font-family:'Liberation Serif', serif;transform:scaleX(0.9251);transform-origin:0 0;-webkit-text-stroke:0.35px #566579;">&lt;03.03.2021 - 21:34:18&gt; [DownloadManager]: Saving...</div>
<div class="t" style="left:340.13px;top:1636px;font-size:29.70px;color:#cdcdcd;font-family:'Liberation Serif', serif;transform:scaleX(0.9246);transform-origin:0 0;-webkit-text-stroke:0.35px #566579;">&lt;03.03.2021 - 21:34:18&gt; [RestQueryHandler] @192.168.1.12: Removing download id 1Lhy4N...</div>
<div class="t" style="left:340.13px;top:1664px;font-size:29.70px;color:#cdcdcd;font-family:'Liberation Serif', serif;transform:scaleX(0.9244);transform-origin:0 0;-webkit-text-stroke:0.35px #566579;">&lt;03.03.2021 - 21:34:14&gt; [DownloadManager]: Saved!</div>
<div class="t" style="left:340.13px;top:1692px;font-size:29.70px;color:#cdcdcd;font-family:'Liberation Serif', serif;transform:scaleX(0.9251);transform-origin:0 0;-webkit-text-stroke:0.35px #566579;">&lt;03.03.2021 - 21:34:14&gt; [DownloadManager]: Saving...</div>
<div class="t" style="left:340.13px;top:1720px;font-size:29.70px;color:#cdcdcd;font-family:'Liberation Serif', serif;transform:scaleX(0.9251);transform-origin:0 0;-webkit-text-stroke:0.35px #566579;">&lt;03.03.2021 - 21:34:14&gt; [RestQueryHandler] @192.168.1.12: Removing download id 1Lhy85...</div>
<div class="t" style="left:340.11px;top:1748px;font-size:29.70px;color:#cdcdcd;font-family:'Liberation Serif', serif;transform:scaleX(0.9364);transform-origin:0 0;-webkit-text-stroke:0.35px #566579;">&lt;03.03.2021 - 21:30:00&gt; [DownloadManager]: Saved!</div>
<div class="t" style="left:340.10px;top:1776px;font-size:29.70px;color:#cdcdcd;font-family:'Liberation Serif', serif;transform:scaleX(0.9455);transform-origin:0 0;-webkit-text-stroke:0.35px #566579;">&lt;03.03.2021 - 21:30:00&gt; [DownloadManager]: All threads have finished. Now saving...</div>
</div>
</body></html>
